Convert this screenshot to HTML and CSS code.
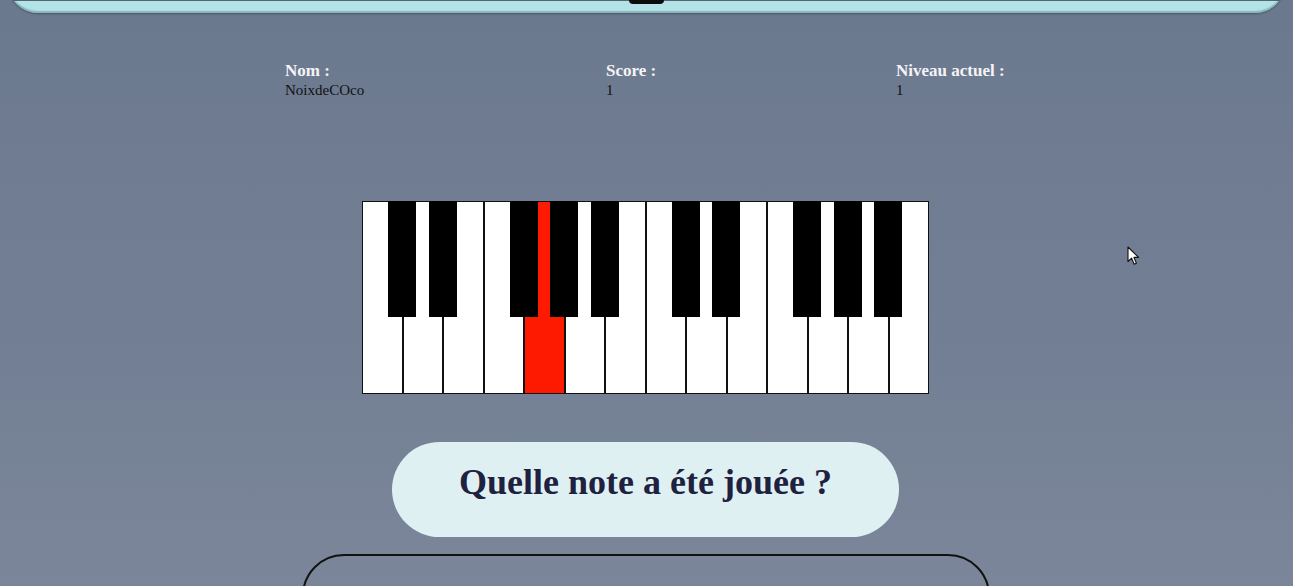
FILE: index.html
```html
<!DOCTYPE html>
<html lang="fr">
<head>
<meta charset="utf-8">
<title>Quelle note a été jouée ?</title>
<link rel="stylesheet" href="styles.css">
</head>
<body>
<header class="topbar"><span class="nub"></span></header>

<section class="info">
  <div class="stat stat-nom"><div class="label">Nom :</div><div class="value">NoixdeCOco</div></div>
  <div class="stat stat-score"><div class="label">Score :</div><div class="value">1</div></div>
  <div class="stat"><div class="label">Niveau actuel :</div><div class="value">1</div></div>
</section>

<div class="piano">
  <div class="whites">
    <div class="white"></div>
    <div class="white"></div>
    <div class="white"></div>
    <div class="white"></div>
    <div class="white played"></div>
    <div class="white"></div>
    <div class="white"></div>
    <div class="white"></div>
    <div class="white"></div>
    <div class="white"></div>
    <div class="white"></div>
    <div class="white"></div>
    <div class="white"></div>
    <div class="white"></div>
  </div>
  <div class="black" style="--i:1"></div>
  <div class="black" style="--i:2"></div>
  <div class="black" style="--i:4"></div>
  <div class="black" style="--i:5"></div>
  <div class="black" style="--i:6"></div>
  <div class="black" style="--i:8"></div>
  <div class="black" style="--i:9"></div>
  <div class="black" style="--i:11"></div>
  <div class="black" style="--i:12"></div>
  <div class="black" style="--i:13"></div>
</div>

<div class="question">Quelle note a été jouée ?</div>

<div class="answers"></div>

<svg class="cursor" width="14" height="20" viewBox="0 0 14 20" aria-hidden="true">
  <path d="M1 1 L1 15.5 L4.6 12.2 L7.2 18.2 L9.4 17.2 L6.9 11.4 L11.6 11.4 Z" fill="#ffffff" stroke="#111" stroke-width="1.1" stroke-linejoin="round"/>
</svg>
</body>
</html>
```

FILE: styles.css
```css
html, body {
  margin: 0;
  padding: 0;
  height: 100%;
  overflow: hidden;
}

body {
  position: relative;
  background: linear-gradient(180deg, #6b798f 0%, #737f94 60%, #7b869a 100%);
  font-family: "Liberation Serif", "Times New Roman", serif;
}

.topbar {
  display: flex;
  justify-content: center;
  align-items: flex-start;
  box-sizing: border-box;
  height: 40px;
  margin: -27px 8px 0 8px;
  padding-top: 27px;
  background: linear-gradient(180deg, #b3e3e6 27px, #56666f 27px, #56666f 28px, #b3e3e6 28px);
  border-radius: 0 0 30px 30px;
  box-shadow: inset 0 -2px 1px rgba(60, 100, 110, 0.35), 0 1px 2px rgba(30, 40, 55, 0.45);
}

.nub {
  display: block;
  width: 35px;
  height: 4px;
  margin-left: -1px;
  background: #0c0c0c;
  border-radius: 0 0 6px 6px;
}

.info {
  display: flex;
  margin-top: 47px;
  padding-left: 285px;
}

.stat-nom { width: 321px; }
.stat-score { width: 290px; }

.label {
  font-size: 17px;
  line-height: 21px;
  font-weight: bold;
  color: #f4f4f6;
}

.value {
  font-size: 15px;
  line-height: 18px;
  color: #111;
}

.piano {
  position: relative;
  width: 567px;
  height: 193px;
  margin: 102px auto 0 auto;
  left: -1px;
}

.whites {
  display: flex;
  height: 100%;
}

.white {
  flex: 1;
  background: #ffffff;
  border: 1px solid #111;
}

.white.played {
  background: #fe1a00;
}

.black {
  position: absolute;
  top: 0;
  left: calc(var(--i) * 40.5px - 14.5px);
  width: 28px;
  height: 116px;
  background: #000;
}

.question {
  box-sizing: border-box;
  width: 507px;
  height: 95px;
  margin: 48px auto 0 auto;
  padding-top: 20px;
  border-radius: 48px;
  background: #dff0f2;
  color: #1f2140;
  font-size: 36px;
  line-height: 41px;
  font-weight: bold;
  text-align: center;
  position: relative;
  left: -1px;
}

.answers {
  box-sizing: border-box;
  width: 688px;
  height: 120px;
  margin: 17px auto 0 auto;
  border: 2px solid #111;
  border-radius: 42px 42px 0 0;
  position: relative;
  left: -1px;
}

.cursor {
  position: absolute;
  left: 1127px;
  top: 246px;
}
```
